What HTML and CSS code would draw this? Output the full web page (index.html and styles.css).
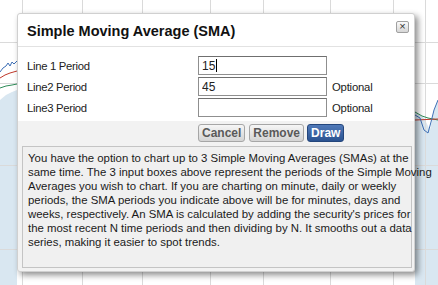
FILE: index.html
```html
<!DOCTYPE html>
<html>
<head lang="en">
    <meta charset="UTF-8">
    <title>Simple Moving Average</title>
    <link rel="stylesheet" href="styles.css">
</head>
<body>
<div id="page">
    <svg class="chart" width="438" height="285" viewBox="0 0 438 285">
        <path d="M0 100 L6 95 L12 92 L17 90 L17 285 L0 285 Z" fill="#d9e7f1"/>
        <path d="M415 112 L424 118 L430 130 L434 110 L438 100 L438 285 L415 285 Z" fill="#d9e7f1"/>
        <g stroke="#dadada" stroke-width="1">
            <line x1="22.5" y1="0" x2="22.5" y2="285"/>
            <line x1="82.5" y1="0" x2="82.5" y2="285"/>
            <line x1="142.5" y1="0" x2="142.5" y2="285"/>
            <line x1="210.5" y1="0" x2="210.5" y2="285"/>
            <line x1="263.5" y1="0" x2="263.5" y2="285"/>
            <line x1="330.5" y1="0" x2="330.5" y2="285"/>
            <line x1="393.5" y1="0" x2="393.5" y2="285"/>
            <line x1="425.5" y1="0" x2="425.5" y2="285"/>
            <line x1="0" y1="42.5" x2="438" y2="42.5"/>
            <line x1="0" y1="83.5" x2="438" y2="83.5"/>
            <line x1="0" y1="165.5" x2="438" y2="165.5"/>
            <line x1="0" y1="249.5" x2="438" y2="249.5"/>
        </g>
        <polyline points="0,72 3,68 6,66 8,63 10,66 12,62 14,64 17,61" fill="none" stroke="#3d6fb6" stroke-width="1"/>
        <polyline points="0,78 5,75 10,73 17,71" fill="none" stroke="#c0392b" stroke-width="1"/>
        <polyline points="0,88 6,86 12,85 17,84" fill="none" stroke="#2e8b57" stroke-width="1"/>
        <polyline points="415,112 422,116 428,118 438,120" fill="none" stroke="#2e8b57" stroke-width="1"/>
        <polyline points="415,120 438,119" fill="none" stroke="#c0392b" stroke-width="1"/>
        <polyline points="415,115 420,118 424,130 428,133 431,122 434,110 438,100" fill="none" stroke="#3d6fb6" stroke-width="1"/>
    </svg>

    <div class="dialog">
        <div class="dlg-title">Simple Moving Average (SMA)</div>
        <span class="dlg-close">&#215;</span>

        <div class="form">
            <div class="row">
                <label>Line 1 Period</label>
                <span class="field"><input type="text" value="15"/><i class="caret"></i></span>
            </div>
            <div class="row">
                <label>Line2 Period</label>
                <span class="field"><input type="text" value="45"/></span>
                <span class="opt">Optional</span>
            </div>
            <div class="row">
                <label>Line3 Period</label>
                <span class="field"><input type="text" value=""/></span>
                <span class="opt">Optional</span>
            </div>
        </div>

        <div class="footer">
            <div class="buttons">
                <button class="btn">Cancel</button>
                <button class="btn">Remove</button>
                <button class="btn btn-blue">Draw</button>
            </div>
            <div class="info">
                You have the option to chart up to 3 Simple Moving Averages (SMAs) at the<br>
                same time. The 3 input boxes above represent the periods of the Simple Moving<br>
                Averages you wish to chart. If you are charting on minute, daily or weekly<br>
                periods, the SMA periods you indicate above will be for minutes, days and<br>
                weeks, respectively. An SMA is calculated by adding the security's prices for<br>
                the most recent N time periods and then dividing by N. It smooths out a data<br>
                series, making it easier to spot trends.
            </div>
        </div>
    </div>
</div>
</body>
</html>
```

FILE: styles.css
```css
*{
    margin: 0;
    padding: 0;
    box-sizing: border-box;
}
body{
    font-family: "Liberation Sans", Arial, sans-serif;
    font-size: 12px;
    color: #222;
    background: #fff;
}
#page{
    position: relative;
    width: 438px;
    height: 285px;
    overflow: hidden;
}
.chart{
    position: absolute;
    left: 0;
    top: 0;
}
.dialog{
    position: absolute;
    left: 17px;
    top: 13px;
    width: 398px;
    height: 259px;
    background: #f2f2f2;
    border: 1px solid #d0d0d0;
    border-radius: 3px;
    box-shadow: 3px 3px 6px rgba(0, 0, 0, 0.45);
    display: flex;
    flex-direction: column;
}
.dlg-title{
    height: 33px;
    padding: 9px 0 0 9px;
    font-size: 14.5px;
    font-weight: bold;
    color: #111;
    background: #fff;
    border-bottom: 1px solid #e2e2e2;
    border-radius: 3px 3px 0 0;
}
.dlg-close{
    position: absolute;
    top: 7px;
    right: 5px;
    width: 13px;
    height: 12px;
    border: 1px solid #a0a0a0;
    border-radius: 2px;
    background: linear-gradient(#fafafa, #d6d6d6);
    font-size: 11px;
    line-height: 9px;
    text-align: center;
    color: #333;
}
.form{
    background: #fff;
    padding: 8px 0 3px 9px;
    font-size: 11.3px;
}
.row{
    display: flex;
    align-items: center;
    height: 21px;
}
.row label{
    width: 171px;
    letter-spacing: -0.3px;
}
.field{
    position: relative;
}
.field input{
    display: block;
    width: 129px;
    height: 19px;
    border: 1px solid #8f8f8f;
    border-top-color: #6f6f6f;
    padding: 0 3px;
    font-family: "Liberation Sans", Arial, sans-serif;
    font-size: 12px;
    color: #222;
    outline: none;
}
.caret{
    position: absolute;
    left: 18px;
    top: 3px;
    width: 1px;
    height: 13px;
    background: #000;
}
.opt{
    margin-left: 5px;
    letter-spacing: -0.2px;
}
.footer{
    flex: 1;
    display: flex;
    flex-direction: column;
    padding: 3px 2px 3px 4px;
}
.buttons{
    display: flex;
    gap: 4px;
    margin-left: 176px;
    height: 18px;
}
.btn{
    height: 18px;
    padding: 0 3px;
    border: 1px solid #a6a6a6;
    border-radius: 3px;
    background: linear-gradient(#f6f6f6, #d4d4d4);
    font-family: "Liberation Sans", Arial, sans-serif;
    font-size: 12px;
    font-weight: bold;
    color: #5a5a5a;
}
.btn-blue{
    margin-left: -1px;
    border-color: #24467c;
    background: linear-gradient(#5079b8, #2b5391);
    color: #fff;
}
.info{
    flex: 1;
    margin-top: 4px;
    background: #f0f0f0;
    border: 1px solid #c4c4c4;
    padding: 4px 5px;
    font-size: 11.4px;
    line-height: 14px;
    white-space: nowrap;
    color: #1a1a1a;
}
```
